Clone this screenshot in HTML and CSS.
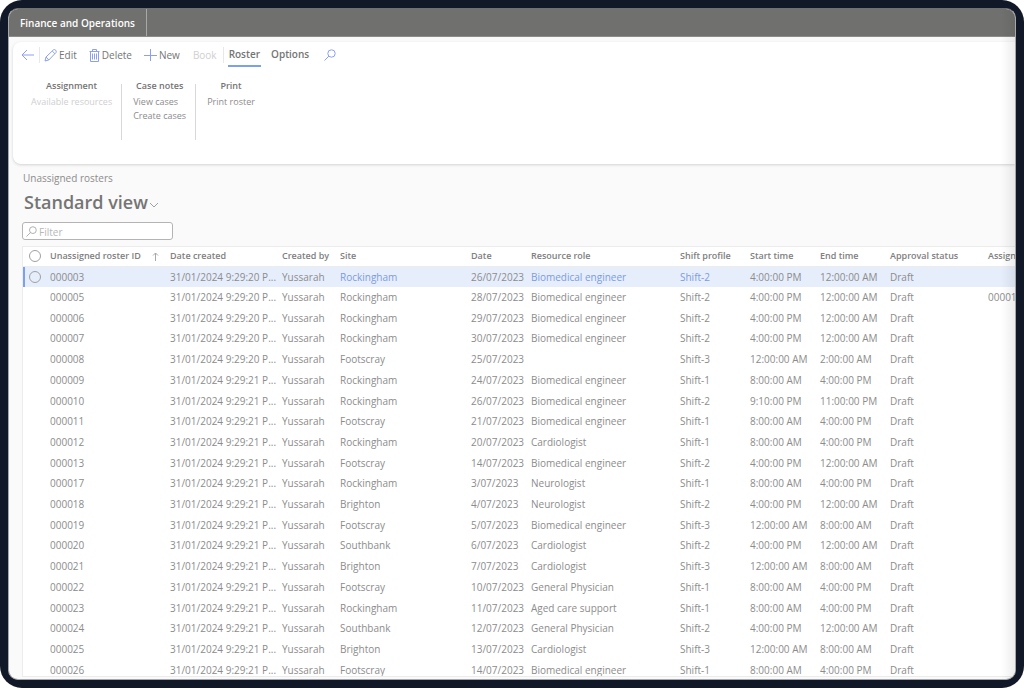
FILE: index.html
```
<!DOCTYPE html>
<html lang="en">
<head>
  <meta charset="UTF-8">
  <meta name="viewport" content="width=device-width, initial-scale=1.0">
  <title>Unassigned rosters</title>
  <link rel="stylesheet" href="styles.css">
</head>
<body>
  <div class="frame">
    <div class="screen">
      <header class="topbar">
        <div class="brand">Finance and Operations</div>
      </header>

      <section class="ribbon">
        <nav class="toolbar">
          <button class="tool back" aria-label="Back">
            <svg width="14" height="12" viewBox="0 0 14 12"><path d="M13 6H1M6 1L1 6l5 5"/></svg>
          </button>
          <button class="tool edit">
            <svg width="13" height="13" viewBox="0 0 13 13"><path d="M1 12l1-4 7.500-7.200q1.200-.6 2.200.4t.3 2.300L4.800 11 1 12zM8.200 2l2.700 2.700M2 8l2.800 3"/></svg>Edit
          </button>
          <button class="tool delete">
            <svg width="11" height="13" viewBox="0 0 11 13"><path d="M.5 2.500h10M3.500 2.500v-2h4v2M1.500 2.500v10h8v-10M3.500 4.500v6M5.500 4.500v6M7.500 4.500v6"/></svg>Delete
          </button>
          <button class="tool new">
            <svg width="13" height="13" viewBox="0 0 13 13"><path d="M6.500 0v12M0 6.500h13"/></svg>New
          </button>
          <button class="tool book" disabled>Book</button>
          <button class="tab active">Roster</button>
          <button class="tab">Options</button>
          <button class="tool search" aria-label="Search">
            <svg width="12" height="12" viewBox="0 0 12 12"><circle cx="7.500" cy="4.500" r="3.700"/><path d="M4.900 7.100L.5 11.500"/></svg>
          </button>
        </nav>
        <div class="groups">
          <div class="group">
            <div class="group-title">Assignment</div>
            <button disabled>Available resources</button>
          </div>
          <div class="group">
            <div class="group-title">Case notes</div>
            <button>View cases</button>
            <button>Create cases</button>
          </div>
          <div class="group">
            <div class="group-title">Print</div>
            <button>Print roster</button>
          </div>
        </div>
      </section>

      <main class="content">
        <div class="caption">Unassigned rosters</div>
        <h1 class="view">
          <button>Standard view
            <svg width="10" height="6" viewBox="0 0 10 6"><path d="M1 1l4 4 4-4"/></svg>
          </button>
        </h1>
        <label class="filter">
          <svg width="11" height="11" viewBox="0 0 12 12"><circle cx="7.500" cy="4.500" r="3.700"/><path d="M4.900 7.100L.5 11.500"/></svg>
          <input type="text" placeholder="Filter" aria-label="Filter">
        </label>

        <div class="grid">
          <table>
            <colgroup>
              <col class="c-pick"><col class="c-id"><col class="c-created"><col class="c-by"><col class="c-site"><col class="c-date"><col class="c-role"><col class="c-time"><col class="c-time"><col class="c-time"><col class="c-status"><col>
            </colgroup>
            <thead>
              <tr>
                <th><input type="checkbox" aria-label="Select all rows"></th>
                <th><div class="sorted">Unassigned roster ID <svg width="7" height="9" viewBox="0 0 7 9"><path d="M3.500 9V1M1 3.500L3.500 1 6 3.500"/></svg></div></th>
                <th>Date created</th><th>Created by</th><th>Site</th><th>Date</th><th>Resource role</th><th>Shift profile</th><th>Start time</th><th>End time</th><th>Approval status</th><th>Assign</th>
              </tr>
            </thead>
            <tbody>
              <tr class="selected"><td><input type="checkbox" aria-label="Select row 000003"></td><td>000003</td><td>31/01/2024 9:29:20 P...</td><td>Yussarah</td><td><a href="#">Rockingham</a></td><td>26/07/2023</td><td><a href="#">Biomedical engineer</a></td><td><a href="#">Shift-2</a></td><td>4:00:00 PM</td><td>12:00:00 AM</td><td>Draft</td><td></td></tr>
              <tr><td></td><td>000005</td><td>31/01/2024 9:29:20 P...</td><td>Yussarah</td><td>Rockingham</td><td>28/07/2023</td><td>Biomedical engineer</td><td>Shift-2</td><td>4:00:00 PM</td><td>12:00:00 AM</td><td>Draft</td><td>00001</td></tr>
              <tr><td></td><td>000006</td><td>31/01/2024 9:29:20 P...</td><td>Yussarah</td><td>Rockingham</td><td>29/07/2023</td><td>Biomedical engineer</td><td>Shift-2</td><td>4:00:00 PM</td><td>12:00:00 AM</td><td>Draft</td><td></td></tr>
              <tr><td></td><td>000007</td><td>31/01/2024 9:29:20 P...</td><td>Yussarah</td><td>Rockingham</td><td>30/07/2023</td><td>Biomedical engineer</td><td>Shift-2</td><td>4:00:00 PM</td><td>12:00:00 AM</td><td>Draft</td><td></td></tr>
              <tr><td></td><td>000008</td><td>31/01/2024 9:29:20 P...</td><td>Yussarah</td><td>Footscray</td><td>25/07/2023</td><td></td><td>Shift-3</td><td>12:00:00 AM</td><td>2:00:00 AM</td><td>Draft</td><td></td></tr>
              <tr><td></td><td>000009</td><td>31/01/2024 9:29:21 P...</td><td>Yussarah</td><td>Rockingham</td><td>24/07/2023</td><td>Biomedical engineer</td><td>Shift-1</td><td>8:00:00 AM</td><td>4:00:00 PM</td><td>Draft</td><td></td></tr>
              <tr><td></td><td>000010</td><td>31/01/2024 9:29:21 P...</td><td>Yussarah</td><td>Rockingham</td><td>26/07/2023</td><td>Biomedical engineer</td><td>Shift-2</td><td>9:10:00 PM</td><td>11:00:00 PM</td><td>Draft</td><td></td></tr>
              <tr><td></td><td>000011</td><td>31/01/2024 9:29:21 P...</td><td>Yussarah</td><td>Footscray</td><td>21/07/2023</td><td>Biomedical engineer</td><td>Shift-1</td><td>8:00:00 AM</td><td>4:00:00 PM</td><td>Draft</td><td></td></tr>
              <tr><td></td><td>000012</td><td>31/01/2024 9:29:21 P...</td><td>Yussarah</td><td>Rockingham</td><td>20/07/2023</td><td>Cardiologist</td><td>Shift-1</td><td>8:00:00 AM</td><td>4:00:00 PM</td><td>Draft</td><td></td></tr>
              <tr><td></td><td>000013</td><td>31/01/2024 9:29:21 P...</td><td>Yussarah</td><td>Footscray</td><td>14/07/2023</td><td>Biomedical engineer</td><td>Shift-2</td><td>4:00:00 PM</td><td>12:00:00 AM</td><td>Draft</td><td></td></tr>
              <tr><td></td><td>000017</td><td>31/01/2024 9:29:21 P...</td><td>Yussarah</td><td>Rockingham</td><td>3/07/2023</td><td>Neurologist</td><td>Shift-1</td><td>8:00:00 AM</td><td>4:00:00 PM</td><td>Draft</td><td></td></tr>
              <tr><td></td><td>000018</td><td>31/01/2024 9:29:21 P...</td><td>Yussarah</td><td>Brighton</td><td>4/07/2023</td><td>Neurologist</td><td>Shift-2</td><td>4:00:00 PM</td><td>12:00:00 AM</td><td>Draft</td><td></td></tr>
              <tr><td></td><td>000019</td><td>31/01/2024 9:29:21 P...</td><td>Yussarah</td><td>Footscray</td><td>5/07/2023</td><td>Biomedical engineer</td><td>Shift-3</td><td>12:00:00 AM</td><td>8:00:00 AM</td><td>Draft</td><td></td></tr>
              <tr><td></td><td>000020</td><td>31/01/2024 9:29:21 P...</td><td>Yussarah</td><td>Southbank</td><td>6/07/2023</td><td>Cardiologist</td><td>Shift-2</td><td>4:00:00 PM</td><td>12:00:00 AM</td><td>Draft</td><td></td></tr>
              <tr><td></td><td>000021</td><td>31/01/2024 9:29:21 P...</td><td>Yussarah</td><td>Brighton</td><td>7/07/2023</td><td>Cardiologist</td><td>Shift-3</td><td>12:00:00 AM</td><td>8:00:00 AM</td><td>Draft</td><td></td></tr>
              <tr><td></td><td>000022</td><td>31/01/2024 9:29:21 P...</td><td>Yussarah</td><td>Footscray</td><td>10/07/2023</td><td>General Physician</td><td>Shift-1</td><td>8:00:00 AM</td><td>4:00:00 PM</td><td>Draft</td><td></td></tr>
              <tr><td></td><td>000023</td><td>31/01/2024 9:29:21 P...</td><td>Yussarah</td><td>Rockingham</td><td>11/07/2023</td><td>Aged care support</td><td>Shift-1</td><td>8:00:00 AM</td><td>4:00:00 PM</td><td>Draft</td><td></td></tr>
              <tr><td></td><td>000024</td><td>31/01/2024 9:29:21 P...</td><td>Yussarah</td><td>Southbank</td><td>12/07/2023</td><td>General Physician</td><td>Shift-2</td><td>4:00:00 PM</td><td>12:00:00 AM</td><td>Draft</td><td></td></tr>
              <tr><td></td><td>000025</td><td>31/01/2024 9:29:21 P...</td><td>Yussarah</td><td>Brighton</td><td>13/07/2023</td><td>Cardiologist</td><td>Shift-3</td><td>12:00:00 AM</td><td>8:00:00 AM</td><td>Draft</td><td></td></tr>
              <tr><td></td><td>000026</td><td>31/01/2024 9:29:21 P...</td><td>Yussarah</td><td>Footscray</td><td>14/07/2023</td><td>Biomedical engineer</td><td>Shift-1</td><td>8:00:00 AM</td><td>4:00:00 PM</td><td>Draft</td><td></td></tr>
            </tbody>
          </table>
        </div>
      </main>
    </div>
  </div>
</body>
</html>
```
FILE: styles.css
```
* {
  box-sizing: border-box;
}

body {
  margin: 0;
  background-color: white;
  font-family: "Open Sans", "Noto Sans", sans-serif;
  font-size: 10px;
  color: #8c8c8c;
}

button {
  border: none;
  padding: 0;
  background: none;
  font: inherit;
  color: inherit;
  cursor: pointer;
}

svg {
  fill: none;
  stroke: currentColor;
  flex: none;
}

.frame {
  height: 100vh;
  padding: 8px;
  border-radius: 22px;
  background-color: #111827;
}

.screen {
  position: relative;
  height: 100%;
  display: flex;
  flex-direction: column;
  overflow: hidden;
  border: 1px solid #a4a8ab;
  border-top-color: #70706e;
  border-radius: 10px;
  background-color: #fafafa;
}

/* soft shade along the right edge */
.screen::after {
  content: "";
  position: absolute;
  top: 0;
  right: 0;
  bottom: 0;
  width: 14px;
  background: linear-gradient(to right, rgba(0, 0, 0, 0), rgba(0, 0, 0, 0.07));
  pointer-events: none;
}

.topbar {
  display: flex;
  height: 28px;
  flex: none;
  background-color: #70706e;
  border-bottom: 1px solid #8c8c8a;
}

.brand {
  padding: 0 11px;
  border-right: 1px solid #a8a8a6;
  font-size: 10px;
  font-weight: 600;
  line-height: 28px;
  color: white;
}

.ribbon {
  flex: none;
  height: 122px;
  margin: 5px 0 0 4px;
  padding: 1px 0 0 8px;
  border-radius: 8px 0 0 8px;
  background-color: white;
  box-shadow: 0 1px 3px rgba(0, 0, 0, 0.16);
}

.toolbar {
  display: flex;
  align-items: center;
  height: 24px;
}

.tool {
  display: flex;
  align-items: center;
  gap: 2px;
  color: #757575;
}

.tool svg {
  color: #8c9ff2;
}

.tool.back {
  height: 16px;
  padding-right: 4px;
  border-right: 1px solid #e8e8e8;
}

.edit {
  margin-left: 4px;
}

.delete {
  margin-left: 12px;
}

.new {
  margin-left: 12px;
}

.tool.book {
  height: 16px;
  margin-left: 13px;
  padding-right: 6px;
  border-right: 1px solid #e8e8e8;
  color: #cfcfcf;
}

.tab {
  height: 24px;
  margin-left: 4px;
  padding: 0 1px;
  border-bottom: 2px solid transparent;
  font-weight: 600;
  color: #757575;
}

.tab.active {
  border-color: #7c9fee;
}

.tab + .tab {
  margin-left: 9px;
}

.search {
  margin-left: 14px;
}

.groups {
  display: flex;
  margin-top: 17px;
}

.group {
  display: flex;
  flex-direction: column;
  align-items: flex-start;
  height: 56px;
  padding: 0 9px 0 11px;
  border-right: 1px solid #d8d8d8;
  font-size: 9px;
  line-height: 14px;
}

.group:first-child {
  padding-left: 10px;
}

.group:last-child {
  border-right: none;
}

.group-title {
  align-self: center;
  margin-bottom: 7px;
  font-weight: 600;
  line-height: 4px;
  color: #757575;
}

.group button:disabled {
  color: #cfcfcf;
}

.content {
  flex: 1;
  min-height: 0;
  display: flex;
  flex-direction: column;
  padding: 7px 0 2px 13px;
}

.caption {
  padding-left: 1px;
  line-height: 14px;
}

.view {
  margin: 4px 0 0 2px;
  font-size: 18px;
  font-weight: 600;
  line-height: 26px;
  color: #757575;
}

.view button {
  display: flex;
  align-items: center;
  gap: 1px;
}

.view svg {
  margin-top: 5px;
  color: #a0a0a0;
}

.filter {
  display: flex;
  align-items: center;
  flex: none;
  width: 151px;
  height: 18px;
  margin-top: 7px;
  padding-left: 3px;
  border: 1px solid #b4b4b4;
  border-radius: 3px;
  background-color: white;
  color: #a8a8a8;
}

.filter input {
  width: 100%;
  border: none;
  padding: 2px 0 0 2px;
  outline: none;
  background: none;
  font: inherit;
}

.filter input::placeholder {
  color: #b8b8b8;
}

.grid {
  flex: 1;
  min-height: 0;
  margin-top: 6px;
  overflow: hidden;
  border: 1px solid #ececec;
  border-right: none;
  background-color: white;
}

table {
  width: 100%;
  height: 101%;
  table-layout: fixed;
  border-collapse: collapse;
}

.c-pick { width: 27px; }
.c-id { width: 120px; }
.c-created { width: 112px; }
.c-by { width: 58px; }
.c-site { width: 131px; }
.c-date { width: 60px; }
.c-role { width: 149px; }
.c-time { width: 70px; }
.c-status { width: 98px; }

th,
td {
  padding: 0;
  text-align: left;
  line-height: 14px;
  white-space: nowrap;
}

th {
  height: 19px;
  border-bottom: 1px solid #ececec;
  font-size: 9px;
  font-weight: 600;
  color: #808080;
}

td {
  height: 20px;
}

th:first-child,
td:first-child {
  padding-left: 6px;
}

.sorted {
  display: flex;
  align-items: center;
  justify-content: space-between;
  padding-right: 11px;
}

.sorted svg {
  color: #a8a8a8;
}

.grid input {
  appearance: none;
  display: block;
  width: 12px;
  height: 12px;
  margin: 0;
  border: 1px solid #a0a0a0;
  border-radius: 50%;
}

.selected {
  background-color: #e6eefc;
}

.selected td:first-child {
  box-shadow: inset 2px 0 #7c9fee;
}

a {
  color: #7c9be0;
  text-decoration: none;
}
```
